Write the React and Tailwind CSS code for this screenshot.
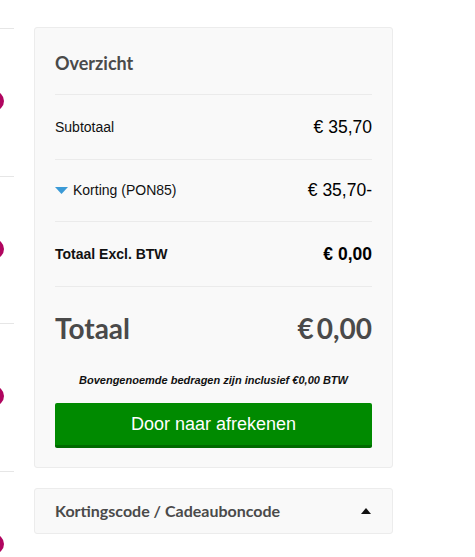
export default function App() {
  const lato = { fontFamily: "Lato, 'Open Sans', sans-serif" };
  const leftBlocks = [0, 1, 2, 3];
  return (
    <div className="w-[475px] h-[557px] bg-white overflow-hidden flex" style={{ fontFamily: "'Liberation Sans', Arial, sans-serif" }}>
      {/* Left, cut-off column */}
      <div className="w-[34px] shrink-0 flex flex-col pt-[28px]">
        {leftBlocks.map((i) => (
          <div key={i} className="h-[147.7px] shrink-0 flex flex-col">
            <div className="w-[14px] h-px bg-[#e6e6e6]" />
            <div className="mt-[62px] -ml-[16px] w-[20px] h-[20px] rounded-full bg-[#b0055f]" />
          </div>
        ))}
      </div>

      {/* Right column */}
      <div className="w-[359px] shrink-0 pt-[27px] flex flex-col">
        <div className="bg-[#f9f9f9] border border-[#ececec] rounded-[3px] px-[20px] pb-[19px]">
          <div className="pt-[23px] pb-[19px] border-b border-[#ebebeb]">
            <h2 className="text-[18px] leading-[24px] font-bold text-[#4a4a4a]" style={lato}>Overzicht</h2>
          </div>
          <div className="h-[65px] flex items-center justify-between border-b border-[#ebebeb]">
            <span className="text-[14px] text-[#111]">Subtotaal</span>
            <span className="text-[17.5px] text-black">€ 35,70</span>
          </div>
          <div className="h-[62px] flex items-center justify-between border-b border-[#ebebeb]">
            <span className="flex items-center text-[14px] text-[#111]">
              <svg width="13" height="7" viewBox="0 0 13 7" className="mr-[5px]">
                <polygon points="0,0 13,0 6.5,7" fill="#3b9ad6" />
              </svg>
              Korting (PON85)
            </span>
            <span className="text-[17.5px] text-black">€ 35,70-</span>
          </div>
          <div className="h-[65px] flex items-center justify-between border-b border-[#ebebeb]">
            <span className="text-[14px] font-bold text-[#111]">Totaal Excl. BTW</span>
            <span className="text-[17.5px] font-bold text-black">€ 0,00</span>
          </div>
          <div className="pt-[25px] flex items-center justify-between">
            <span className="text-[28px] leading-[32px] font-bold text-[#4a4a4a]" style={lato}>Totaal</span>
            <span className="text-[28px] leading-[32px] font-bold text-[#4a4a4a] flex gap-[3px]" style={lato}>
              <span>€</span>
              <span>0,00</span>
            </span>
          </div>
          <p className="mt-[29px] text-center text-[11px] leading-[14px] italic font-bold text-[#111]">
            Bovengenoemde bedragen zijn inclusief €0,00 BTW
          </p>
          <button className="mt-[16px] w-full h-[45px] bg-[#008a00] border-b-[3px] border-[#006b00] rounded-[2px] text-white text-[18px]">
            Door naar afrekenen
          </button>
        </div>

        <div className="mt-[20px] h-[46px] bg-[#f9f9f9] border border-[#ececec] rounded-[3px] px-[20px] flex items-center justify-between">
          <span className="text-[16px] font-bold text-[#4a4a4a]" style={lato}>Kortingscode / Cadeauboncode</span>
          <svg width="10" height="6" viewBox="0 0 10 6" className="mr-[1px]">
            <polygon points="0,6 10,6 5,0" fill="#111" />
          </svg>
        </div>
      </div>
    </div>
  );
}
